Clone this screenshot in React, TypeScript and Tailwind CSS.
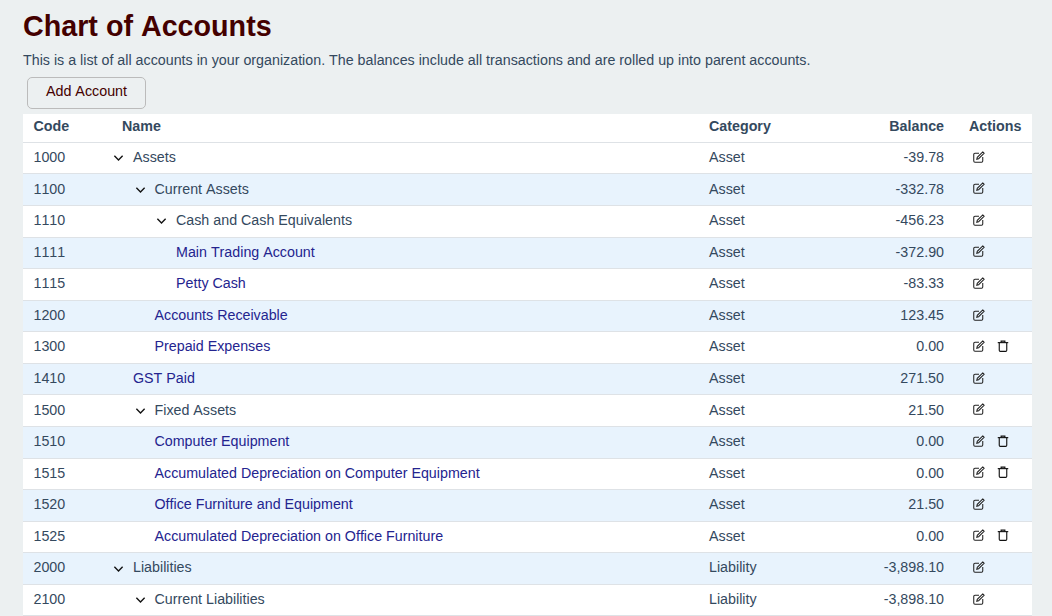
type Account = {
  code: string
  name: string
  category: string
  balance: string
  depth: number
  parent?: boolean
  canDelete?: boolean
}

const accounts: Account[] = [
  { code: '1000', name: 'Assets', category: 'Asset', balance: '-39.78', depth: 0, parent: true },
  { code: '1100', name: 'Current Assets', category: 'Asset', balance: '-332.78', depth: 1, parent: true },
  { code: '1110', name: 'Cash and Cash Equivalents', category: 'Asset', balance: '-456.23', depth: 2, parent: true },
  { code: '1111', name: 'Main Trading Account', category: 'Asset', balance: '-372.90', depth: 2 },
  { code: '1115', name: 'Petty Cash', category: 'Asset', balance: '-83.33', depth: 2 },
  { code: '1200', name: 'Accounts Receivable', category: 'Asset', balance: '123.45', depth: 1 },
  { code: '1300', name: 'Prepaid Expenses', category: 'Asset', balance: '0.00', depth: 1, canDelete: true },
  { code: '1410', name: 'GST Paid', category: 'Asset', balance: '271.50', depth: 0 },
  { code: '1500', name: 'Fixed Assets', category: 'Asset', balance: '21.50', depth: 1, parent: true },
  { code: '1510', name: 'Computer Equipment', category: 'Asset', balance: '0.00', depth: 1, canDelete: true },
  { code: '1515', name: 'Accumulated Depreciation on Computer Equipment', category: 'Asset', balance: '0.00', depth: 1, canDelete: true },
  { code: '1520', name: 'Office Furniture and Equipment', category: 'Asset', balance: '21.50', depth: 1 },
  { code: '1525', name: 'Accumulated Depreciation on Office Furniture', category: 'Asset', balance: '0.00', depth: 1, canDelete: true },
  { code: '2000', name: 'Liabilities', category: 'Liability', balance: '-3,898.10', depth: 0, parent: true },
  { code: '2100', name: 'Current Liabilities', category: 'Liability', balance: '-3,898.10', depth: 1, parent: true },
]

function Chevron() {
  return (
    <svg viewBox="0 0 16 16" className="h-[11px] w-[11px]" fill="none" stroke="#111" strokeWidth="2">
      <path d="M2 5.5l6 6 6-6" />
    </svg>
  )
}

function EditIcon() {
  return (
    <svg viewBox="0 0 16 16" className="h-3 w-3" fill="none" stroke="#222" strokeWidth="1.4">
      <path d="M8 3H2.6C1.7 3 1 3.7 1 4.6v8.8c0 .9.7 1.6 1.6 1.6h8.8c.9 0 1.6-.7 1.6-1.6V8" />
      <path d="M13 1.2l1.8 1.8-7.3 7.3-2.4.6.6-2.4z" />
    </svg>
  )
}

function TrashIcon() {
  return (
    <svg viewBox="0 0 16 16" className="h-3 w-3" fill="none" stroke="#111" strokeWidth="1.5">
      <path d="M1 3.5h14" />
      <path d="M5.5 3.5V1.5h5v2" />
      <path d="M3 3.5v10.2c0 .8.6 1.5 1.4 1.5h7.2c.8 0 1.4-.7 1.4-1.5V3.5" />
    </svg>
  )
}

const indents = ['pl-0', 'pl-[21.5px]', 'pl-[43px]']

export default function App() {
  return (
    <div className="h-[616px] overflow-hidden bg-[#ecf0f1] px-[23px] pt-[9px] font-['Liberation_Sans',Arial,sans-serif] text-[14.28px] text-[#34495e] [font-kerning:none]">
      <h1 className="text-[28.7px] leading-[34px] font-bold text-[#440000]">Chart of Accounts</h1>
      <p className="mt-[8px] leading-[18px]">
        This is a list of all accounts in your organization. The balances include all transactions and are rolled up into parent accounts.
      </p>
      <button className="mt-[8px] ml-1 h-[32px] w-[119px] rounded-[5px] border border-[#bbbbbb] pb-[3px] text-[14.3px] text-[#440000]">
        Add Account
      </button>
      <table className="mt-[5px] w-[1009px] table-fixed border-collapse bg-white">
        <colgroup>
          <col className="w-[89px]" />
          <col className="w-[597px]" />
          <col className="w-[100px]" />
          <col className="w-[135px]" />
          <col />
        </colgroup>
        <thead>
          <tr className="h-[28.4px] border-b border-[#dee2e6] font-bold">
            <th className="pb-[3px] pl-[10.5px] text-left">Code</th>
            <th className="pb-[3px] pl-[10px] text-left">Name</th>
            <th className="pb-[3px] text-left">Category</th>
            <th className="pb-[3px] text-right">Balance</th>
            <th className="pb-[3px] pl-[25px] text-left">Actions</th>
          </tr>
        </thead>
        <tbody>
          {accounts.map((a, i) => (
            <tr key={a.code} className={`h-[31.57px] border-b border-[#dee2e6] [&>td]:pb-[0.9px] ${i % 2 === 1 ? 'bg-[#e8f3fd]' : 'bg-white'}`}>
              <td className="pl-[10.5px]">{a.code}</td>
              <td>
                <div className={`flex items-center ${indents[a.depth]}`}>
                  <span className="flex w-[21px] shrink-0 justify-start pl-px">{a.parent && <Chevron />}</span>
                  <span>
                    {a.parent ? a.name : <a className="text-[#24248f]">{a.name}</a>}
                  </span>
                </div>
              </td>
              <td>{a.category}</td>
              <td className="text-right">{a.balance}</td>
              <td className="pl-[29px]">
                <div className="flex -translate-y-px items-center gap-3">
                  <EditIcon />
                  {a.canDelete && <TrashIcon />}
                </div>
              </td>
            </tr>
          ))}
        </tbody>
      </table>
    </div>
  )
}
